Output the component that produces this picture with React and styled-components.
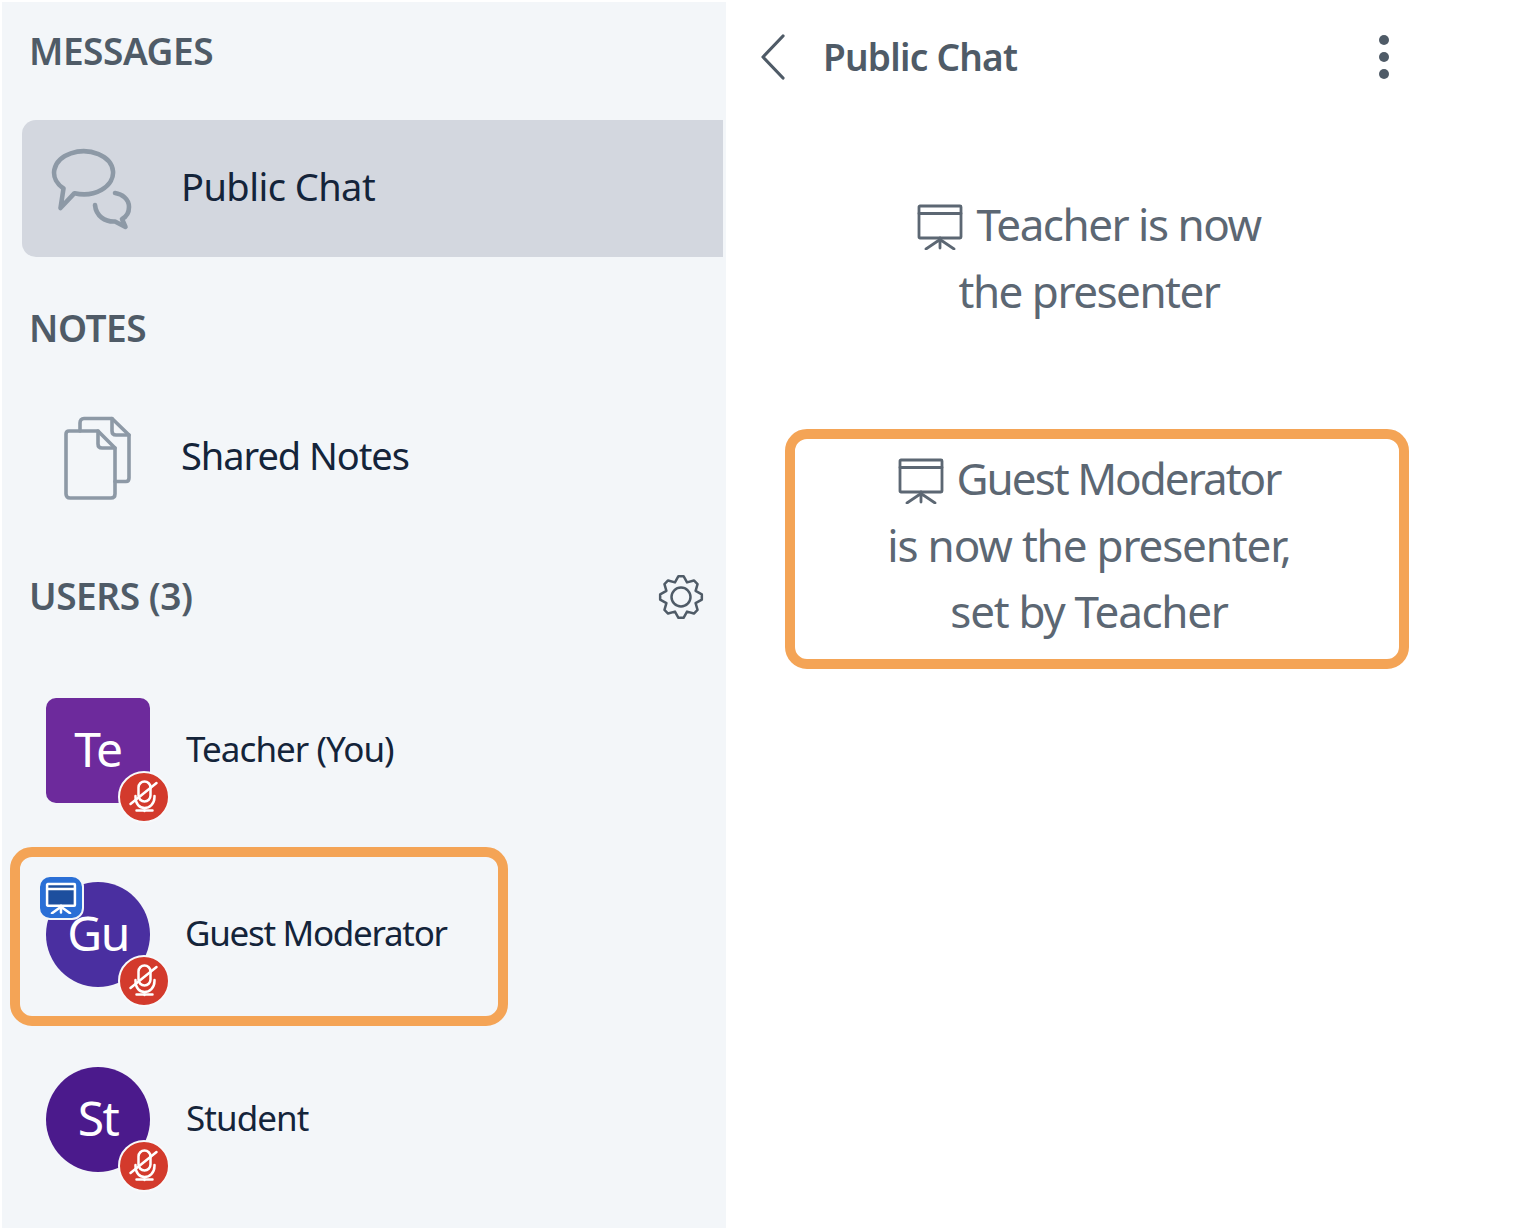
import React from 'react';
import styled, { createGlobalStyle, css } from 'styled-components';

const Global = createGlobalStyle`
  html, body { margin: 0; padding: 0; background: #fff; }
  body { font-family: "Noto Sans", "Open Sans", sans-serif; }
`;

const Page = styled.div`
  display: flex;
  align-items: flex-start;
  width: 1516px;
  height: 1228px;
  overflow: hidden;
  background: #fff;
`;

const Sidebar = styled.aside`
  box-sizing: border-box;
  width: 724px;
  height: 1226px;
  margin: 2px 0 0 2px;
  padding-top: 27px;
  background: #f3f6f9;
  flex: none;
`;

const SectionTitle = styled.div`
  display: flex;
  align-items: center;
  justify-content: space-between;
  height: 46px;
  margin-top: ${p => p.$top}px;
  padding: 0 22px 0 27px;
  font-size: 37px;
  font-weight: 600;
  letter-spacing: -0.45px;
  line-height: 42px;
  color: #4f5b67;
`;

const TitleText = styled.span`
  padding-bottom: 3px;
`;

const ChannelRow = styled.div`
  box-sizing: border-box;
  display: flex;
  align-items: center;
  height: 137px;
  margin: ${p => p.$top}px 3px 0 20px;
  border-radius: 14px 0 0 14px;
  background: ${p => (p.$active ? '#d3d7df' : 'transparent')};
  font-size: 38px;
  color: #14243a;
`;

const ChannelIcon = styled.span`
  box-sizing: border-box;
  display: flex;
  width: 159px;
  padding-left: ${p => p.$left}px;
  flex: none;
`;

const ChannelLabel = styled.span`
  padding-bottom: 5px;
  letter-spacing: ${p => p.$spacing}px;
`;

const UserRow = styled.div`
  display: flex;
  align-items: center;
  gap: 36px;
  margin-top: ${p => p.$top}px;
  padding-left: 44px;
  font-size: 35px;
  letter-spacing: -0.95px;
  color: #14243a;
`;

const HighlightRow = styled.div`
  box-sizing: border-box;
  display: flex;
  align-items: center;
  gap: 35px;
  width: 498px;
  height: 179px;
  margin: 44px 0 0 8px;
  padding: 0 0 4px 26px;
  border: 10px solid #f4a456;
  border-radius: 22px;
  font-size: 35px;
  letter-spacing: -1.3px;
  color: #14243a;
`;

const UserName = styled.span`
  padding-bottom: 4px;
`;

const Avatar = styled.div`
  position: relative;
  box-sizing: border-box;
  display: flex;
  align-items: center;
  justify-content: center;
  width: 104px;
  height: 105px;
  padding-bottom: 5px;
  flex: none;
  border-radius: ${p => (p.$square ? '10px' : '50%')};
  background: ${p => p.$color};
  font-size: 48px;
  letter-spacing: -1.5px;
  color: #fff;
`;

const MicBadge = styled.span`
  position: absolute;
  right: -20px;
  bottom: -20px;
  box-sizing: border-box;
  display: flex;
  align-items: center;
  justify-content: center;
  width: 52px;
  height: 52px;
  border: 2.5px solid #f8f9fb;
  border-radius: 50%;
  background: #d33a2c;
`;

const PresenterBadge = styled.span`
  position: absolute;
  left: -8px;
  top: -7px;
  box-sizing: border-box;
  display: flex;
  align-items: center;
  justify-content: center;
  width: 46px;
  height: 45px;
  border: 2px solid #f3f6f9;
  border-radius: 12px;
  background: #2a6fd6;
`;

const ChatPane = styled.main`
  flex: 1;
  min-width: 0;
`;

const ChatHeader = styled.header`
  display: flex;
  align-items: center;
  gap: 38px;
  height: 114px;
  padding: 0 127px 0 35px;
  font-size: 37px;
  font-weight: 600;
  letter-spacing: -0.75px;
  color: #4f5b67;
`;

const ChatTitle = styled.span`
  flex: 1;
  padding-bottom: 2px;
`;

const Dots = styled.span`
  display: flex;
  flex-direction: column;
  gap: 7px;
`;

const Dot = styled.i`
  display: block;
  width: 10px;
  height: 10px;
  border-radius: 50%;
  background: #4f5b67;
`;

const messageText = css`
  box-sizing: border-box;
  width: 624px;
  margin-left: 59px;
  text-align: center;
  font-size: 44px;
  line-height: 66.5px;
  letter-spacing: -1.5px;
  color: #5c6773;
`;

const Notice = styled.div`
  ${messageText}
  margin-top: 77px;
  padding-right: 16px;
`;

const HighlightNotice = styled.div`
  ${messageText}
  margin-top: 105px;
  height: 240px;
  padding: 6px 16px 14px 0;
  border: 10px solid #f4a456;
  border-radius: 22px;
`;

const NoticeLine = styled.span`
  letter-spacing: ${p => p.$spacing}px;
`;

const InlineIcon = styled.svg`
  display: inline-block;
  width: 46px;
  height: 46px;
  margin-right: 13px;
  vertical-align: -9px;
`;

const PresentGlyph = () => (
  <InlineIcon viewBox="0 0 46 46" fill="none" stroke="#5c6773" strokeWidth="2.8" strokeLinecap="round" strokeLinejoin="round">
    <rect x="2" y="2" width="42" height="32" rx="1" />
    <path d="M2 9.5H44M23 34V44M23 35.5L9 45M23 35.5L37 45" />
  </InlineIcon>
);

const BadgeGlyph = () => (
  <svg width="32" height="32" viewBox="0 0 46 46" fill="none" stroke="#fff" strokeWidth="3.6" strokeLinecap="round" strokeLinejoin="round">
    <rect x="3" y="3" width="40" height="31" rx="1" fill="#1d4f9e" />
    <path d="M3 10H43M23 34V44M23 35.5L10 45M23 35.5L36 45" />
  </svg>
);

const MicGlyph = () => (
  <svg width="34" height="36" viewBox="1.5 0 34 36" fill="none" stroke="#fff" strokeWidth="2.5" strokeLinecap="round" strokeLinejoin="round">
    <rect x="13" y="2.5" width="12" height="20" rx="6" />
    <path d="M10 17V18C10 25 14 29 19 29C24 29 29 25 29 18V17M19 29V32M11 31.5H27" />
    <path d="M31 4L5 25" />
  </svg>
);

const ChatGlyph = () => (
  <svg width="82" height="84" viewBox="0 0 82 84" fill="none" stroke="#8d99a6" strokeWidth="4.6" strokeLinecap="round" strokeLinejoin="round">
    <path d="M13.5 41.5A29.5 21.5 0 1 1 24.5 46.2L10.5 61Z" />
    <path d="M65 46C72 47 79 52 79 60C79 66 76 70 72 72L75.5 80L65 74.5C55 75 46 69 45 58" />
  </svg>
);

const NotesGlyph = () => (
  <svg width="68" height="84" viewBox="0 0 68 84" fill="none" stroke="#8d99a6" strokeWidth="3.6" strokeLinecap="round" strokeLinejoin="round">
    <path d="M16 15V7C16 4 17.5 2.5 20 2.5H48L65 19V62C65 64 64 65.5 62 65.5H51" />
    <path d="M48 2.5V15C48 17.5 49.5 19 52 19H65" />
    <path d="M5 15H34L51 32V78C51 80.5 50 82 47 82H6C3.5 82 2 80.5 2 78V18C2 16 3 15 5 15Z" />
    <path d="M34 15V28C34 30.5 35.5 32 38 32H51" />
  </svg>
);

const polar = (deg, r) => {
  const a = ((deg - 90) * Math.PI) / 180;
  return `${(23 + r * Math.cos(a)).toFixed(2)} ${(23 + r * Math.sin(a)).toFixed(2)}`;
};

const gearPath =
  Array.from({ length: 8 }, (_, k) => {
    const t = k * 45;
    return `${k ? 'L' : 'M'}${polar(t - 22.5, 15.8)}L${polar(t - 7, 21)}L${polar(t + 7, 21)}`;
  }).join('') + 'Z';

const GearGlyph = () => (
  <svg width="46" height="46" viewBox="0 0 46 46" fill="none" stroke="#4f5b67" strokeWidth="2.5" strokeLinecap="round" strokeLinejoin="round">
    <path d={gearPath} />
    <circle cx="23" cy="23" r="9.5" />
  </svg>
);

const Chevron = () => (
  <svg width="24" height="46" viewBox="0 0 24 46" fill="none" stroke="#4f5b67" strokeWidth="3.2" strokeLinecap="round" strokeLinejoin="round">
    <path d="M22 2L2 23L22 44" />
  </svg>
);

const Mic = () => (
  <MicBadge>
    <MicGlyph />
  </MicBadge>
);

export default function App() {
  return (
    <Page>
      <Global />
      <Sidebar>
        <SectionTitle $top={0}><TitleText>MESSAGES</TitleText></SectionTitle>
        <ChannelRow $top={45} $active>
          <ChannelIcon $left={28}><ChatGlyph /></ChannelIcon>
          <ChannelLabel $spacing={-0.55}>Public Chat</ChannelLabel>
        </ChannelRow>
        <SectionTitle $top={49}><TitleText>NOTES</TitleText></SectionTitle>
        <ChannelRow $top={37}>
          <ChannelIcon $left={42}><NotesGlyph /></ChannelIcon>
          <ChannelLabel $spacing={-1.05}>Shared Notes</ChannelLabel>
        </ChannelRow>
        <SectionTitle $top={48}>
          <TitleText>USERS (3)</TitleText>
          <GearGlyph />
        </SectionTitle>
        <UserRow $top={78}>
          <Avatar $square $color="#6d2a9c">Te<Mic /></Avatar>
          <UserName>Teacher (You)</UserName>
        </UserRow>
        <HighlightRow>
          <Avatar $color="#4a2fa0">
            <PresenterBadge><BadgeGlyph /></PresenterBadge>
            Gu
            <Mic />
          </Avatar>
          <UserName>Guest Moderator</UserName>
        </HighlightRow>
        <UserRow $top={41}>
          <Avatar $color="#4b1a8c">St<Mic /></Avatar>
          <UserName>Student</UserName>
        </UserRow>
      </Sidebar>
      <ChatPane>
        <ChatHeader>
          <Chevron />
          <ChatTitle>Public Chat</ChatTitle>
          <Dots><Dot /><Dot /><Dot /></Dots>
        </ChatHeader>
        <Notice>
          <PresentGlyph />Teacher is now<br />the presenter
        </Notice>
        <HighlightNotice>
          <PresentGlyph /><NoticeLine $spacing={-1.97}>Guest Moderator</NoticeLine><br />
          <NoticeLine $spacing={-1.17}>is now the presenter,</NoticeLine><br />
          <NoticeLine $spacing={-1.3}>set by Teacher</NoticeLine>
        </HighlightNotice>
      </ChatPane>
    </Page>
  );
}
